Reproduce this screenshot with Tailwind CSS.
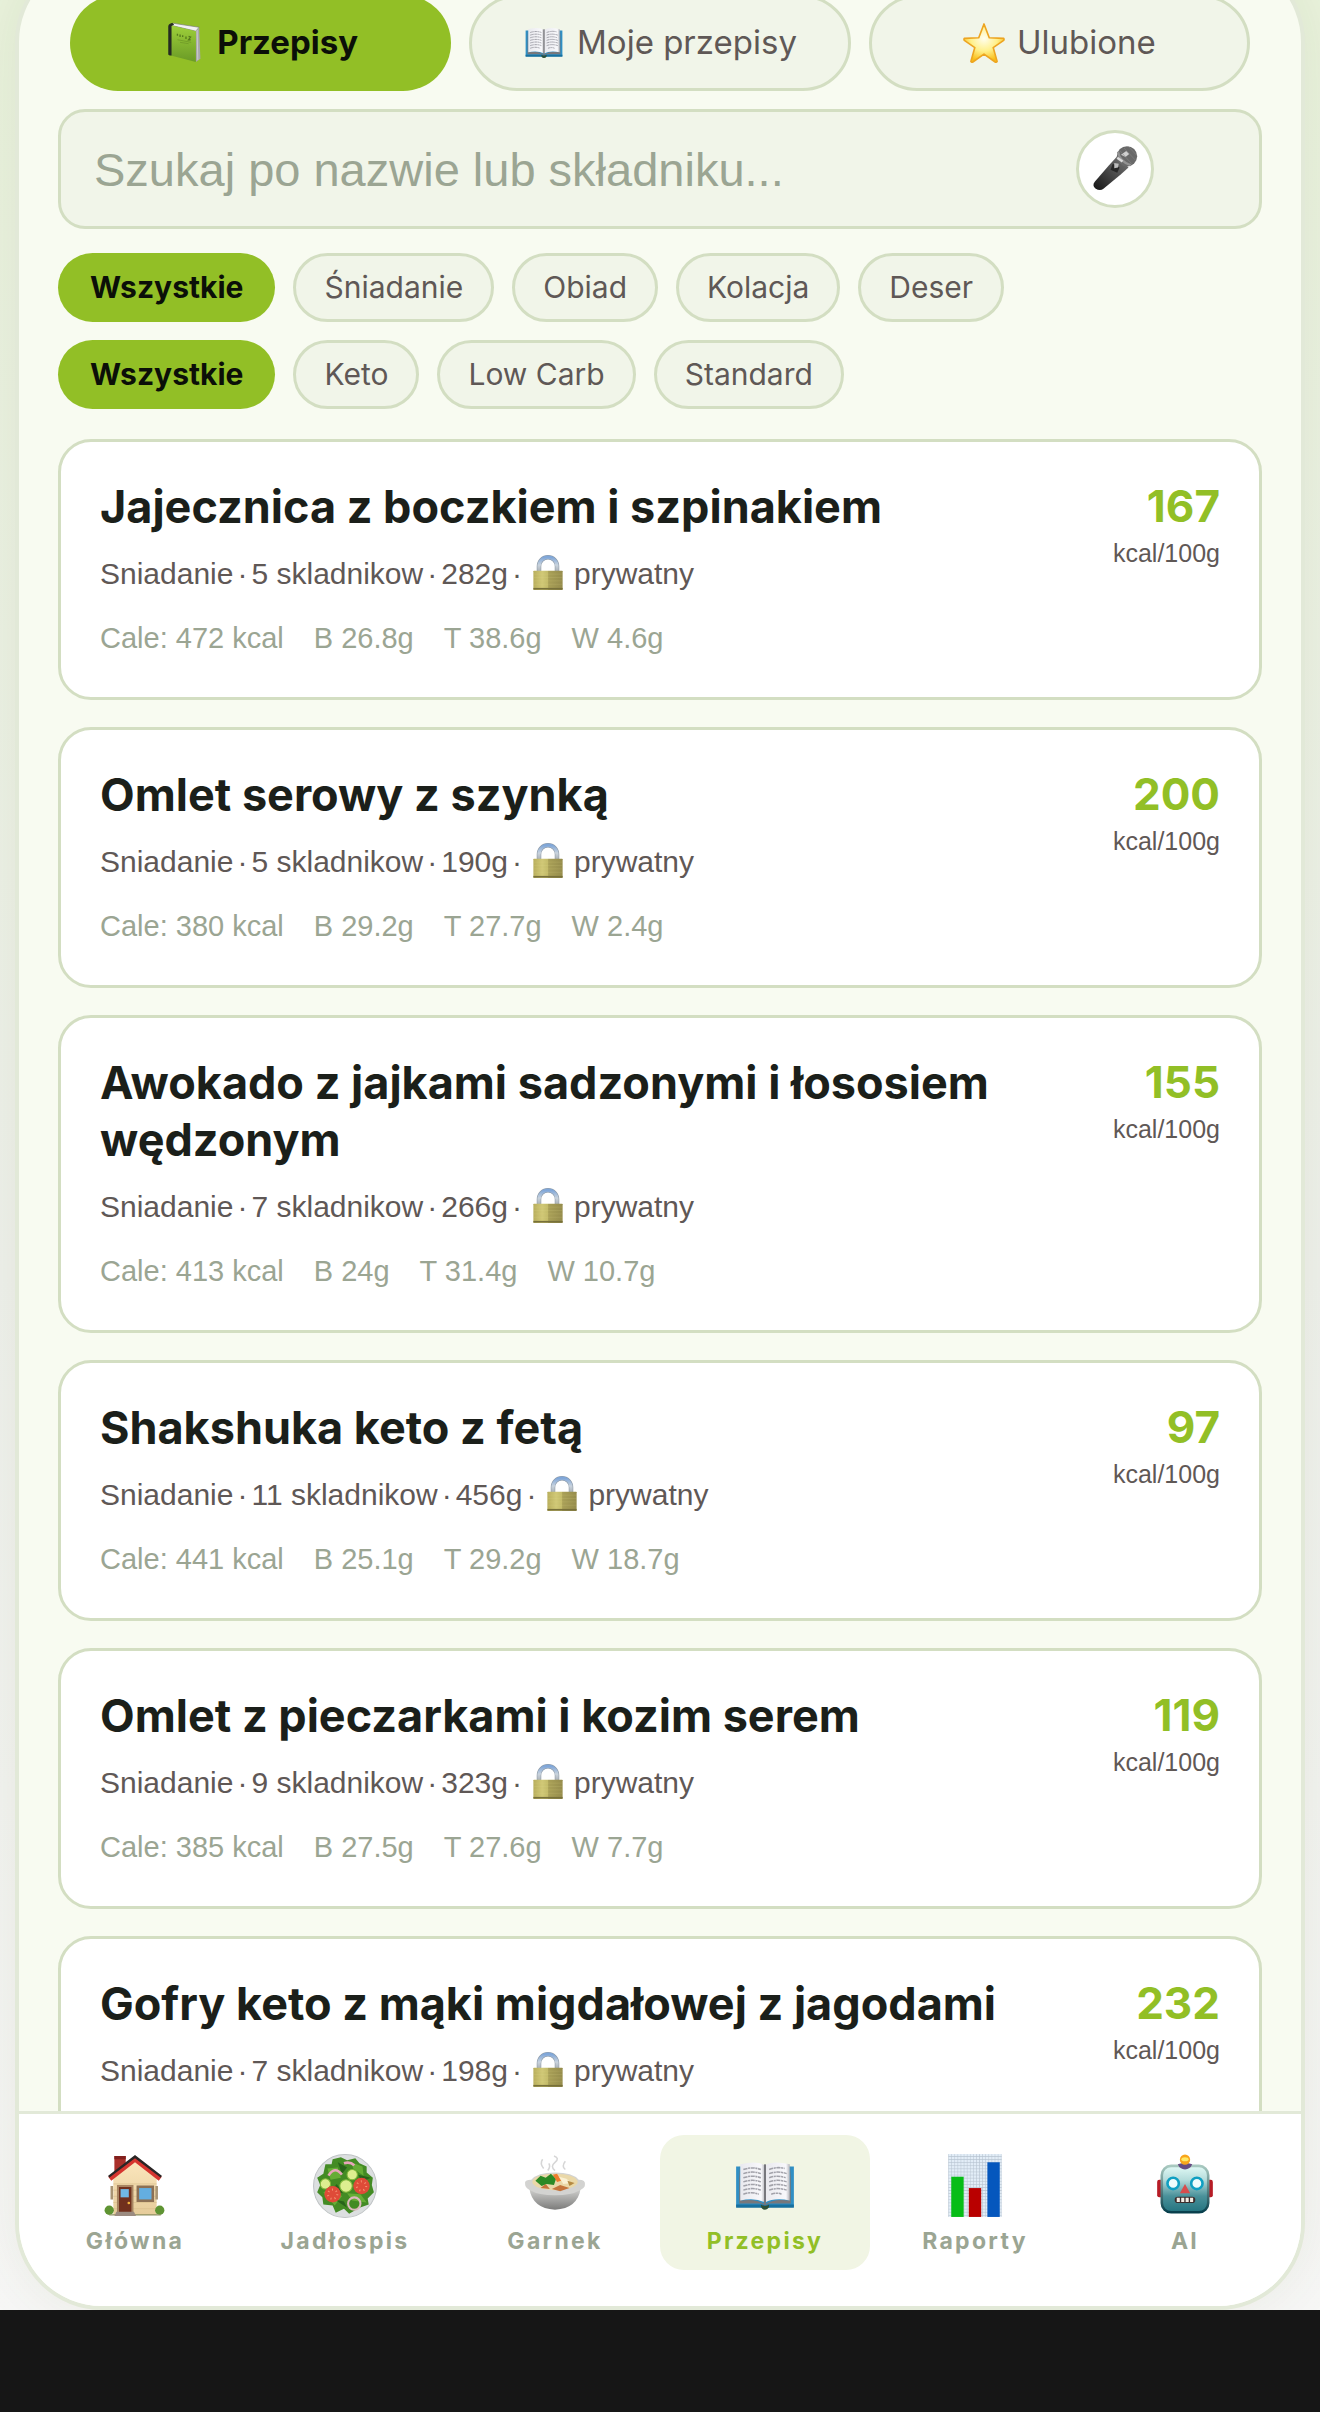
<!DOCTYPE html>
<html lang="pl">
<head>
    <meta charset="UTF-8">
    <meta name="viewport" content="width=device-width, initial-scale=1.0">
    <title>Przepisy</title>
    <script src="https://cdn.jsdelivr.net/npm/@tailwindcss/browser@4"></script>
</head>
<body class="flex h-screen flex-col overflow-hidden bg-[#161616] font-['Inter',sans-serif] text-[#5f5856]">
    <!-- Icons -->
    <svg class="absolute size-0" aria-hidden="true">
        <defs>
            <linearGradient id="g-cover" x1="0" y1="0" x2="0" y2="1"><stop offset="0" stop-color="#9ed03a"/><stop offset="1" stop-color="#6a9a26"/></linearGradient>
            <linearGradient id="g-page" x1="0" y1="0" x2="1" y2="0"><stop offset="0" stop-color="#e9e9ee"/><stop offset=".85" stop-color="#f8f8fb"/><stop offset="1" stop-color="#b5b5ba"/></linearGradient>
            <radialGradient id="g-star" cx=".5" cy=".38" r=".6"><stop offset="0" stop-color="#fffef0"/><stop offset=".55" stop-color="#fff08a"/><stop offset="1" stop-color="#f9bd16"/></radialGradient>
            <linearGradient id="g-mic" x1="1" y1="0" x2="0" y2="1"><stop offset="0" stop-color="#777"/><stop offset=".5" stop-color="#484848"/><stop offset="1" stop-color="#151515"/></linearGradient>
            <linearGradient id="g-lock" x1="0" y1="0" x2="1" y2="0"><stop offset="0" stop-color="#b8ae5c"/><stop offset=".3" stop-color="#d0c876"/><stop offset=".5" stop-color="#c2ba68"/><stop offset=".52" stop-color="#a9a057"/><stop offset="1" stop-color="#958c4c"/></linearGradient>
            <linearGradient id="g-shackle" x1="0" y1="0" x2="0" y2="1"><stop offset="0" stop-color="#7fa6d8"/><stop offset=".5" stop-color="#c9d3dd"/><stop offset="1" stop-color="#a3a8ac"/></linearGradient>
            <linearGradient id="g-wall" x1="0" y1="0" x2="0" y2="1"><stop offset="0" stop-color="#fbe6bd"/><stop offset="1" stop-color="#e6cc9a"/></linearGradient>
            <linearGradient id="g-bowl" x1="0" y1="0" x2="0" y2="1"><stop offset="0" stop-color="#d4d4d2"/><stop offset="1" stop-color="#7b7b7a"/></linearGradient>
            <linearGradient id="g-robot" x1="0" y1="0" x2="0" y2="1"><stop offset="0" stop-color="#e2faf6"/><stop offset=".3" stop-color="#b5dcdb"/><stop offset=".65" stop-color="#4a919a"/><stop offset="1" stop-color="#23737f"/></linearGradient>
            <linearGradient id="g-robot-edge" x1="0" y1="0" x2="0" y2="1"><stop offset="0" stop-color="#a9c9c0"/><stop offset="1" stop-color="#073f4c"/></linearGradient>
            <pattern id="p-grid" width="3" height="3" patternUnits="userSpaceOnUse"><rect width="3" height="3" fill="#e2edf7"/><path d="M0 0H3M0 0V3" stroke="#b7c3d0" stroke-width="1"/></pattern>
            <symbol id="i-notebook" viewBox="0 0 64 64">
                <path d="M12 5L16 2L55 8L50 14Z" fill="#f2f2f2" stroke="#777" stroke-width="1"/>
                <path d="M50 14L55 8L57 56L50 61Z" fill="#a9a9ac"/>
                <path d="M52 12L53 58" stroke="#ddd" stroke-width="1"/>
                <path d="M12 5L50 14V61L12 51Z" fill="url(#g-cover)"/>
                <path d="M14 1L10 3Q8 4 8 7V49Q8 51 13 51V8Q12 5 17 4Z" fill="#252b22"/>
                <path d="M22 18V21M26 19V23M30 20V23M35 22V26M39 22L42 23L39 27H42" stroke="#55791c" stroke-width="2" fill="none"/>
                <path d="M22 27L43 31M26 31L39 33" stroke="#6a9225" stroke-width="1"/>
            </symbol>
            <symbol id="i-book" viewBox="0 0 64 64">
                <path d="M4 13H60V52H37Q32 56 27 52H4Z" fill="#2f8fc4"/>
                <path d="M4 50H60V53H4Z" fill="#17709f"/>
                <path d="M7 12L9 46Q24 44 32 50Q40 44 55 46L57 12V49H36L32 51L28 49H7Z" fill="#77777b"/>
                <path d="M8 11Q24 7 32 12V48Q23 43 8 46Z" fill="url(#g-page)"/>
                <path d="M56 11Q40 7 32 12V48Q41 43 56 46Z" fill="url(#g-page)"/>
                <path d="M32 11V50" stroke="#77777c" stroke-width="2"/>
                <path d="M11 16Q20 13 28 16M11 20Q20 17 28 20M11 24Q20 21 28 24M11 28Q20 25 28 28M11 32Q20 29 28 32M11 36Q20 33 28 36M11 40Q19 37 26 40M36 16Q44 13 51 15M36 20Q44 17 53 20M36 24Q44 21 52 24M36 28Q44 25 53 28M36 32Q44 29 53 32M36 36Q44 33 53 36M38 40Q44 38 48 40" fill="none" stroke="#a2a2aa" stroke-width="1.5" stroke-dasharray="4 .6 2 .6"/>
                <path d="M28 50Q32 53 36 50Q36 55 32 55Q28 55 28 50Z" fill="#2e5036"/>
            </symbol>
            <symbol id="i-star" viewBox="0 0 64 64">
                <path d="M32 3L40 24L62 25Q63 26 62 28L46 39L52 60Q51 62 49 61L32 49L15 61Q13 62 12 60L18 39L2 28Q1 26 2 25L24 24Z" fill="url(#g-star)" stroke="#eda521" stroke-width="2.5" stroke-linejoin="round"/>
            </symbol>
            <symbol id="i-mic" viewBox="0 0 64 64">
                <path d="M35 15L50 30L40 39L17 58Q12 62 6 58Q1 54 5 49L24 27Z" fill="url(#g-mic)"/>
                <circle cx="48" cy="15" r="13.500" fill="#696969"/>
                <path d="M36 9Q38 22 53 27" fill="none" stroke="#929292" stroke-width="3"/>
                <path d="M40 13L47 8L51 12L46 16Z" fill="#d0d0d0"/>
                <path d="M35 17L42 22" stroke="#dcdcdc" stroke-width="3"/>
                <path d="M44 4L59 20M38 7L55 26M50 2L61 14" stroke="#838383" stroke-width=".8"/>
                <path d="M29 25L38 30L35 37L26 33Z" fill="#272727"/>
                <path d="M31 24L37 25L36 30L31 31Z" fill="#bdbdbd"/>
            </symbol>
            <symbol id="i-lock" viewBox="0 0 64 64">
                <path d="M16 32V20a16 16 0 0 1 32 0V32" fill="none" stroke="#8d99a5" stroke-width="8"/>
                <path d="M16 32V20a16 16 0 0 1 32 0V32" fill="none" stroke="url(#g-shackle)" stroke-width="6"/>
                <rect x="6" y="28" width="52" height="34" rx="1" fill="url(#g-lock)"/>
                <path d="M6 34H58M6 40H58M6 46H58M6 52H58" stroke="#e3dc90" stroke-opacity=".25"/>
                <path d="M6 60H58" stroke="#77703a" stroke-width="3"/>
            </symbol>
            <symbol id="i-house" viewBox="0 0 64 64">
                <path d="M12 3H23V16L12 23Z" fill="#a9302a"/><path d="M12 3H23V6H12Z" fill="#82201d"/>
                <path d="M11 24L32 7L53 24V60H11Z" fill="url(#g-wall)"/>
                <path d="M11 30H53M11 36H53M11 42H53M11 48H53M11 54H53" stroke="#d8bd8a" stroke-width=".6"/>
                <path d="M32 3L58 23L55 27L32 9L9 27L6 23Z" fill="#d6352f"/>
                <path d="M6 22L32 2L58 22L57 24L32 5L7 24Z" fill="#2a2626"/>
                <rect x="14.500" y="31" width="16" height="27" fill="#a88562"/><rect x="16.500" y="33" width="12" height="25" fill="#71301d"/>
                <rect x="18" y="35" width="8" height="8" fill="#71b8e4"/><circle cx="26" cy="48.500" r="1.300" fill="#f4b53e"/>
                <rect x="33.500" y="31.500" width="17" height="16" fill="#8c7054"/><rect x="36" y="34" width="12" height="11" fill="#64aee0"/>
                <path d="M9.500 32V45M53 32V45" stroke="#a89473" stroke-width="2.500"/>
                <circle cx="7" cy="55.500" r="4.500" fill="#5f9433"/><circle cx="56" cy="55.500" r="4.500" fill="#5f9433"/>
                <path d="M7 60H57" stroke="#8d8f61" stroke-width="1"/>
                <path d="M14 57H31L33 61H12Z" fill="#9b8b80"/>
            </symbol>
            <symbol id="i-salad" viewBox="0 0 64 64">
                <circle cx="32" cy="32" r="30.500" fill="#dcdfe0" stroke="#bfc3c5" stroke-width="1"/>
                <path d="M20 6L28 4L34 7L42 5L46 10L53 13L53 19L59 24L58 31L60 38L54 44L55 50L46 53L36 59L31 54L23 58L20 51L11 50L10 43L5 38L8 31L5 24L11 20L13 11L19 11Z" fill="#438b24"/>
                <path d="M15 15L25 14L28 24L18 26ZM38 9L49 13L50 22L40 15ZM11 38L21 33L29 42L22 51ZM34 39L47 40L53 48L39 46Z" fill="#66ad35"/>
                <path d="M25 9L34 14L29 20ZM45 21L57 24L48 28ZM22 45L34 53L31 47ZM24 30L18 37L30 39Z" fill="#28641a"/>
                <path d="M16 22Q22 12 29 21M31 10Q37 8 41 12" fill="none" stroke="#e8a5ba" stroke-width="2.500"/>
                <circle cx="13" cy="30" r="5" fill="#ddee90" stroke="#81b83b"/><circle cx="33" cy="32" r="6" fill="#ddee90" stroke="#81b83b"/><circle cx="39" cy="21" r="5" fill="#ddee90" stroke="#81b83b"/>
                <circle cx="20" cy="40" r="8" fill="#df4b38"/><circle cx="20" cy="40" r="4.500" fill="none" stroke="#f49070" stroke-dasharray="1 3" stroke-width="2"/>
                <circle cx="48" cy="32" r="8" fill="#df4b38"/><circle cx="48" cy="32" r="4.500" fill="none" stroke="#f49070" stroke-dasharray="1 3" stroke-width="2"/>
                <circle cx="41" cy="49" r="6" fill="none" stroke="#dcb9bd" stroke-width="2"/>
            </symbol>
            <symbol id="i-pot" viewBox="0 0 64 64">
                <path d="M21 15Q17 10 20 6M32 17Q27 13 32 9T31 3M42 16Q38 13 42 8M25 17Q28 13 26 10" fill="none" stroke="#d6d6d6" stroke-width="1.500"/>
                <path d="M7 34Q10 54 32 55Q54 54 57 34Z" fill="url(#g-bowl)"/>
                <path d="M3 30Q2 26 9 26Q15 19 32 19T55 26Q62 26 61 31Q61 34 56 36Q48 41 32 41T8 36Q3 34 3 30Z" fill="#d3d3d1"/>
                <ellipse cx="32" cy="28" rx="22" ry="8" fill="#ead8a8"/>
                <path d="M13 27L18 22L23 24L28 20L33 25L31 31L24 30L19 32Z" fill="#2c8a25"/>
                <path d="M30 21L34 20L38 27L34 28Z" fill="#ee7c2e"/>
                <path d="M36 23L43 25L48 29L40 30Z" fill="#faf0d2"/>
                <path d="M18 34L23 30L27 35ZM29 35L37 31L46 34L37 37Z" fill="#c5743b"/>
                <path d="M44 27L51 29L46 32Z" fill="#b58a42"/>
            </symbol>
            <symbol id="i-chart" viewBox="0 0 64 64">
                <rect x="6" y="1" width="52" height="61" fill="url(#p-grid)"/>
                <rect x="9" y="23" width="12" height="39" fill="#07bd17"/><rect x="26" y="34" width="12" height="28" fill="#b90000"/><rect x="44" y="9" width="12" height="53" fill="#0557bd"/>
            </symbol>
            <symbol id="i-robot" viewBox="0 0 64 64">
                <rect x="5" y="26" width="8" height="17" rx="2" fill="#b71c26"/><rect x="51" y="26" width="8" height="17" rx="2" fill="#b71c26"/>
                <rect x="9.500" y="12.500" width="45" height="45" rx="9" fill="url(#g-robot)" stroke="url(#g-robot-edge)" stroke-width="2.500"/>
                <path d="M25 11Q32 8 39 11Q37 16 32 16T25 11Z" fill="#674c82"/><circle cx="32" cy="6.500" r="5" fill="#f9a51b"/><ellipse cx="32" cy="6" rx="3.500" ry="2" fill="#ffe965"/>
                <circle cx="20.500" cy="29.500" r="5.500" fill="#effcfc" stroke="#109fc2" stroke-width="2.500"/><circle cx="43.500" cy="29.500" r="5.500" fill="#effcfc" stroke="#109fc2" stroke-width="2.500"/>
                <path d="M32 30L37 39H27Z" fill="#d84d4d"/>
                <rect x="22" y="42.500" width="20" height="6" rx="3" fill="#3b2d2d"/><path d="M24 45.500H40" stroke="#f4eee5" stroke-width="4" stroke-dasharray="3 1.300"/>
            </symbol>
        </defs>
    </svg>

    <div class="flex min-h-0 flex-1 overflow-hidden bg-linear-to-b from-[#e9f2dc] via-[#eff1ec] via-55% to-[#f7f7f6] px-[15px]">
        <div class="-mt-[45px] flex min-w-0 flex-1 flex-col overflow-hidden rounded-[87px] border-4 border-[#e2e9d8] bg-[#f8fbf1] shadow-[0_0_60px_rgba(60,80,30,0.08)]">
            <main class="min-h-0 flex-1 overflow-hidden px-[39px] pt-9">
                <!-- Tabs -->
                <div class="grid grid-cols-3 gap-[18px] px-3 text-[33px]">
                    <button class="flex h-24 items-center justify-center gap-3 rounded-full bg-[#92bf26] font-bold text-[#0b0f08]">
                        <svg class="size-[42px]"><use href="#i-notebook"/></svg>Przepisy
                    </button>
                    <button class="flex h-24 items-center justify-center gap-3 rounded-full border-3 border-[#d3dec2] bg-[#f1f5e9]">
                        <svg class="size-[42px]"><use href="#i-book"/></svg>Moje przepisy
                    </button>
                    <button class="flex h-24 items-center justify-center gap-3 rounded-full border-3 border-[#d3dec2] bg-[#f1f5e9]">
                        <svg class="size-[42px]"><use href="#i-star"/></svg>Ulubione
                    </button>
                </div>

                <!-- Search -->
                <div class="relative mt-[18px]">
                    <input type="text" aria-label="Szukaj przepisu" placeholder="Szukaj po nazwie lub składniku..." class="block h-[120px] w-full rounded-[27px] border-3 border-[#d3dec2] bg-[#f1f5e9] pr-48 pl-[33px] font-['Liberation_Sans',sans-serif] text-[47px] placeholder:text-[#9ba593]">
                    <button aria-label="Szukaj głosowo" class="absolute top-[21px] right-[108px] flex size-[78px] items-center justify-center rounded-full border-3 border-[#d3dec2] bg-white">
                        <svg class="size-12"><use href="#i-mic"/></svg>
                    </button>
                </div>

                <!-- Filters -->
                <div class="mt-6 flex gap-[18px] text-[30px]">
                    <button class="h-[69px] rounded-full bg-[#92bf26] px-8 font-bold text-[#0b0f08]">Wszystkie</button>
                    <button class="h-[69px] rounded-full border-3 border-[#d3dec2] bg-[#f1f5e9] px-7">Śniadanie</button>
                    <button class="h-[69px] rounded-full border-3 border-[#d3dec2] bg-[#f1f5e9] px-7">Obiad</button>
                    <button class="h-[69px] rounded-full border-3 border-[#d3dec2] bg-[#f1f5e9] px-7">Kolacja</button>
                    <button class="h-[69px] rounded-full border-3 border-[#d3dec2] bg-[#f1f5e9] px-7">Deser</button>
                </div>
                <div class="mt-[18px] flex gap-[18px] text-[30px]">
                    <button class="h-[69px] rounded-full bg-[#92bf26] px-8 font-bold text-[#0b0f08]">Wszystkie</button>
                    <button class="h-[69px] rounded-full border-3 border-[#d3dec2] bg-[#f1f5e9] px-7">Keto</button>
                    <button class="h-[69px] rounded-full border-3 border-[#d3dec2] bg-[#f1f5e9] px-7">Low Carb</button>
                    <button class="h-[69px] rounded-full border-3 border-[#d3dec2] bg-[#f1f5e9] px-7">Standard</button>
                </div>

                <div id="recipes" class="mt-[30px] flex flex-col gap-[27px]"></div>
            </main>

            <!-- Bottom navigation -->
            <nav class="flex border-t-3 border-[#e2e9d8] bg-white px-[11px] pt-[21px] pb-9 text-[23px] leading-7 font-bold tracking-widest text-[#9ba593]">
                <a href="#" class="flex h-[135px] flex-1 flex-col items-center gap-2 rounded-3xl pt-[18px]"><svg class="size-[66px]"><use href="#i-house"/></svg>Główna</a>
                <a href="#" class="flex h-[135px] flex-1 flex-col items-center gap-2 rounded-3xl pt-[18px]"><svg class="size-[66px]"><use href="#i-salad"/></svg>Jadłospis</a>
                <a href="#" class="flex h-[135px] flex-1 flex-col items-center gap-2 rounded-3xl pt-[18px]"><svg class="size-[66px]"><use href="#i-pot"/></svg>Garnek</a>
                <a href="#" class="flex h-[135px] flex-1 flex-col items-center gap-2 rounded-3xl bg-[#f1f5e4] pt-[18px] text-[#92bf26]"><svg class="size-[66px]"><use href="#i-book"/></svg>Przepisy</a>
                <a href="#" class="flex h-[135px] flex-1 flex-col items-center gap-2 rounded-3xl pt-[18px]"><svg class="size-[66px]"><use href="#i-chart"/></svg>Raporty</a>
                <a href="#" class="flex h-[135px] flex-1 flex-col items-center gap-2 rounded-3xl pt-[18px]"><svg class="size-[66px]"><use href="#i-robot"/></svg>AI</a>
            </nav>
        </div>
    </div>
    <div class="h-[102px] shrink-0"></div>

    <script>
        const recipes = [
            { name: 'Jajecznica z boczkiem i szpinakiem', items: 5, weight: 282, per100: 167, macros: ['Cale: 472 kcal', 'B 26.8g', 'T 38.6g', 'W 4.6g'] },
            { name: 'Omlet serowy z szynką', items: 5, weight: 190, per100: 200, macros: ['Cale: 380 kcal', 'B 29.2g', 'T 27.7g', 'W 2.4g'] },
            { name: 'Awokado z jajkami sadzonymi i łososiem wędzonym', items: 7, weight: 266, per100: 155, macros: ['Cale: 413 kcal', 'B 24g', 'T 31.4g', 'W 10.7g'] },
            { name: 'Shakshuka keto z fetą', items: 11, weight: 456, per100: 97, macros: ['Cale: 441 kcal', 'B 25.1g', 'T 29.2g', 'W 18.7g'] },
            { name: 'Omlet z pieczarkami i kozim serem', items: 9, weight: 323, per100: 119, macros: ['Cale: 385 kcal', 'B 27.5g', 'T 27.6g', 'W 7.7g'] },
            { name: 'Gofry keto z mąki migdałowej z jagodami', items: 7, weight: 198, per100: 232, macros: [] }
        ];

        // Render recipe cards
        document.getElementById('recipes').innerHTML = recipes.map((r) => `
            <article class="flex justify-between gap-6 rounded-[33px] border-3 border-[#d3dec2] bg-white px-[39px] pt-9 pb-[35px] font-['Liberation_Sans',sans-serif]">
                <div class="min-w-0">
                    <h2 class="font-['Inter',sans-serif] text-[45px] leading-[57px] font-bold text-[#1b1f1a]">${r.name}</h2>
                    <div class="mt-[15px] flex h-[46px] items-center gap-1 text-[30px]"><span>Sniadanie</span><span>·</span><span>${r.items} skladnikow</span><span>·</span><span>${r.weight}g</span><span>·</span><svg class="mx-1 size-9"><use href="#i-lock"/></svg><span>prywatny</span></div>
                    <p class="mt-5 flex h-[46px] items-center gap-[30px] text-[29px] text-[#9ba593]">${r.macros.map((m) => `<span>${m}</span>`).join('')}</p>
                </div>
                <div class="shrink-0 text-right">
                    <div class="font-['Inter',sans-serif] text-[44px] leading-[57px] font-bold text-[#92bf26]">${r.per100}</div>
                    <div class="mt-0.5 text-[25px] leading-8">kcal/100g</div>
                </div>
            </article>`).join('');
    </script>
</body>
</html>
